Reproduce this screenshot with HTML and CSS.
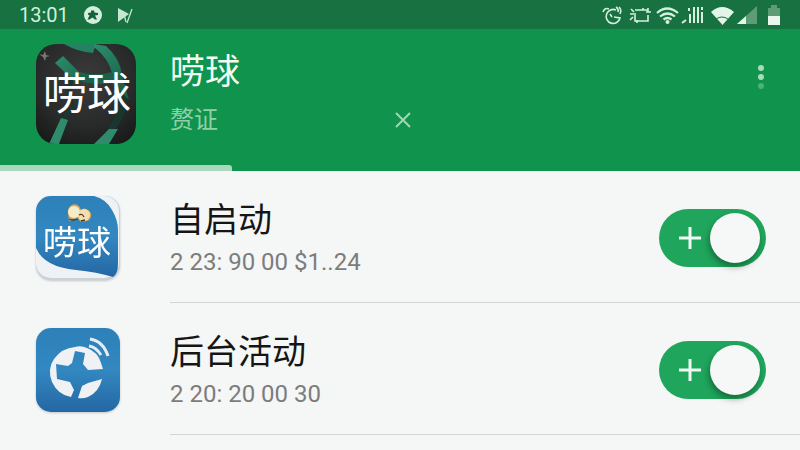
FILE: index.html
```
<!doctype html>
<html lang="zh-CN">
<head>
<meta charset="utf-8">
<title>唠球</title>
<meta name="viewport" content="width=device-width, initial-scale=1">
<link rel="stylesheet" href="styles.css">
</head>
<body>

<div class="statusbar">
  <span class="clock">13:01</span>
  <svg class="status-left" width="52" height="20" viewBox="0 0 52 20" aria-hidden="true">
    <circle cx="9" cy="10" r="9" fill="#d3efdb"/>
    <path d="M7 5.500h3l.5 2 3.500.5v2l-3 .5 2 4h-2l-2.500-2-3 2h-2l2-4-1.500-1V8l3-.5z" fill="#17613a"/>
    <path d="M34 3l11 6-11 8z" fill="#c5e6d0"/>
    <path d="M48 4l-5 14M40 9l2 8" fill="none" stroke="#c5e6d0" stroke-width="1.300"/>
  </svg>

  <!-- alarm, vibrate, wifi, signal, battery -->
  <svg class="status-right" width="180" height="20" viewBox="602 4 180 20" aria-hidden="true">
    <g fill="none" stroke="#d6f0de" stroke-width="1.600">
      <path d="M616 9a7 7 0 1 0 4 8l-6-1M609 8q-4-2-6 3M616 6q3 2 2 5M619 6q3 3 1 7M610 13l2 3"/>
      <path d="M635 9h13v2M648 14v6h-13v-6M643 9v-2M646 11h5M630 13h6M631 8l3 3M630 19l3-3M637 19v3M648 7v3"/>
      <path d="M657 12q10-9 21 0M660 15.500q7.500-6 15 0M663.500 18.500q4-3 8 0" stroke-width="2.200"/>
      <path d="M682 22l4-3M690 13v9M689 7v3M694 6v16M698 6v16M702 11v11M702 6v3" stroke-width="2"/>
    </g>
    <circle cx="667.500" cy="21" r="2" fill="#d6f0de"/>
    <path d="M711 11q11-10 23 0l-11.500 13z" fill="#e2f5e7"/>
    <path d="M716 18q6-4 12 0" fill="none" stroke="#177140"/>
    <path d="M737 23l20-18v18z" fill="#5d9c76"/>
    <path d="M737 23l9-8v8z" fill="#e2f5e7"/>
    <path d="M768 7h3v-3h6v3h3v12h-12z" fill="#5d9c76"/>
    <path d="M768 15h12v9h-12z" fill="#e8f8ec"/>
  </svg>
</div>

<header class="appbar">
  <svg class="app-icon" viewBox="0 0 100 100" role="img" aria-label="唠球">
    <defs>
      <radialGradient id="ball" cx=".5" cy=".35" r=".75">
        <stop offset="0" stop-color="#3b3b3b"/>
        <stop offset=".65" stop-color="#282929"/>
        <stop offset="1" stop-color="#161a18"/>
      </radialGradient>
      <linearGradient id="band" x1="0" y1="0" x2="1" y2="1">
        <stop offset="0" stop-color="#2c8e6c"/>
        <stop offset="1" stop-color="#1c6b50"/>
      </linearGradient>
      <clipPath id="tile"><rect width="100" height="100" rx="20"/></clipPath>
    </defs>
    <g clip-path="url(#tile)">
      <rect width="100" height="100" fill="url(#ball)"/>
      <path d="M82 30Q96 60 74 87" fill="none" stroke="#19372f" stroke-width="7"/>
      <path d="M37 28Q30 52 36 62L27 76" fill="none" stroke="#19372f" stroke-width="5"/>
      <path d="M36 25Q54 34 77 28L86 32 93 56 76 39Q56 42 37 35z" fill="#1c614a"/>
      <path d="M19 19l8-7 17 17-5 9z" fill="url(#band)"/>
      <path d="M28 0h32l-3 9Q42 8 28 0z" fill="#258260"/>
      <path d="M58 0l12 2q14 12 16 29l-10-2Q73 15 58 3z" fill="url(#band)"/>
      <path d="M25 74l7 2-9 24H13zM73 85h9l-9 15H58z" fill="#2f8b6c"/>
      <path d="M3 10l4 1 2-4 1 4 4 1-4 1-1 4-2-4z" fill="#777"/>
    </g>
    <text class="icon-text" x="51" y="66" font-size="44">唠球</text>
  </svg>
  <div class="heading">
    <h1>唠球</h1>
    <div class="subline">
      <span>赘证</span>
      <button class="clear" type="button" aria-label="关闭">
        <svg width="18" height="18" viewBox="0 0 18 18"><path d="M2 2l14 14M16 2L2 16"/></svg>
      </button>
    </div>
  </div>
  <button class="menu" type="button" aria-label="更多">
    <svg width="8" height="28" viewBox="0 0 8 28">
      <circle cx="4" cy="5" r="3"/>
      <circle cx="4" cy="14" r="3"/>
      <circle cx="4" cy="23" r="3" opacity=".4"/>
    </svg>
  </button>
  <div class="tab-indicator"></div>
</header>

<main>
  <div class="row">
    <svg class="row-icon" viewBox="0 0 84 84" role="img" aria-label="唠球">
      <defs>
        <linearGradient id="blue" x1="0" y1="0" x2="0" y2="1">
          <stop offset="0" stop-color="#2d80b8"/>
          <stop offset=".5" stop-color="#3388c1"/>
          <stop offset="1" stop-color="#2467a4"/>
        </linearGradient>
        <clipPath id="small-tile"><rect width="84" height="84" rx="15"/></clipPath>
      </defs>
      <g clip-path="url(#small-tile)">
        <rect width="84" height="84" fill="#c9d2d8"/>
        <rect width="83" height="82" rx="15" fill="#eef2f4"/>
        <path d="M0 0h58q12 3 18 14 6 10 6 20v34q0 10-5 13Q61 76 40 74 8 71 0 52z" fill="url(#blue)"/>
      </g>
      <path d="M33 25l-1-7a6 7 0 0 1 13-4q3-3 7 0a6 6 0 0 1-1 11l-6 1-4-4z" fill="#d2a75d"/>
      <circle cx="38" cy="16" r="6" fill="#f7ecc9"/>
      <circle cx="48" cy="19" r="6" fill="#f3dfae"/>
      <path d="M33 23q4 2 9 0M43 19q3-2 5 2M45 25l4-1" fill="none" stroke="#493b2a" stroke-width="1.300"/>
      <text class="icon-text" x="41" y="59" font-size="34">唠球</text>
    </svg>
    <label class="text" for="autostart">
      <span class="title">自启动</span>
      <span class="detail">2 23: 90 00 $1..24</span>
    </label>
    <span class="switch">
      <input type="checkbox" id="autostart" checked>
      <svg class="plus" viewBox="0 0 22 22" aria-hidden="true"><path d="M11 0v22M0 11h22"/></svg>
    </span>
  </div>

  <div class="row">
    <svg class="row-icon" viewBox="0 0 84 84" aria-hidden="true">
      <rect width="84" height="84" rx="15" fill="url(#blue)"/>
      <g fill="#eff1f4">
        <path d="M39 19Q45 17 51 20 62 24 65 35L67 41 52 42 47 36 49 25 39 23 36 35 32 38 20 36 21 51 34 54 38 62 35 69Q22 67 16 54 11 41 18 31 26 20 39 19z"/>
        <path d="M66 51Q63 64 52 69 47 71 42 70L46 58 52 55z"/>
      </g>
      <path d="M53 18q7 1 12 9M54 11q13 2 18 17" fill="none" stroke="#e5edf3" stroke-width="3"/>
    </svg>
    <label class="text" for="background">
      <span class="title">后台活动</span>
      <span class="detail">2 20: 20 00 30</span>
    </label>
    <span class="switch">
      <input type="checkbox" id="background" checked>
      <svg class="plus" viewBox="0 0 22 22" aria-hidden="true"><path d="M11 0v22M0 11h22"/></svg>
    </span>
  </div>
</main>

</body>
</html>
```
FILE: styles.css
```
:root{--bar:#177140;--green:#10934c;--switch:#1fa65c;--bg:#f5f6f6;}
*{box-sizing:border-box;}
body{margin:0;background:var(--bg);font-family:Roboto,"Noto Sans CJK SC",sans-serif;color:#151515;}
svg{display:block;}
button{padding:0;border:0;background:none;cursor:pointer;}

/* status bar */
.statusbar{display:flex;align-items:center;height:29px;padding:0 18px 0 19px;background:var(--bar);color:#d3efdb;}
.clock{font-size:20px;line-height:28px;}
.status-left{margin-left:15px;}
.status-right{margin-left:auto;}

/* app bar */
.appbar{position:relative;display:flex;align-items:flex-start;min-height:142px;padding:15px 35px 20px 36px;background:var(--green);color:#f0fbf3;}
.app-icon{flex:none;width:100px;height:100px;}
.heading{flex:1;margin-left:34px;}
h1{margin:0;font-size:35px;font-weight:400;line-height:58px;}
.subline{display:flex;align-items:center;gap:176px;font-size:24px;line-height:36px;color:#8fd0a8;}
.clear svg{fill:none;stroke:#a0d8b4;stroke-width:2;}
.menu{margin-top:19px;}
.menu svg{fill:#a9dcbb;}
.tab-indicator{position:absolute;left:0;bottom:0;width:29%;height:6px;background:#a9d8bc;border-top-right-radius:3px;}
.icon-text{fill:#fff;font-family:"Noto Sans CJK SC",sans-serif;text-anchor:middle;}

/* settings rows */
.row{position:relative;display:flex;align-items:center;min-height:132px;padding:2px 0 0 36px;}
.row::after{content:"";position:absolute;left:170px;right:0;bottom:0;height:1px;background:#d3d5d5;}
.row-icon{flex:none;width:84px;height:84px;filter:drop-shadow(0 1px 1px rgba(0,0,0,.2));}
.text{flex:1;margin-left:50px;}
.title,.detail{display:block;}
.title{font-size:34px;line-height:48px;}
.detail{font-size:24px;line-height:36px;color:#7b7d7d;}

/* toggle switch */
.switch{position:relative;flex:none;margin-right:34px;}
.switch input{display:flex;align-items:center;justify-content:flex-end;width:107px;height:58px;margin:0;padding:6px;border-radius:29px;background:#b5b9b7;appearance:none;cursor:pointer;}
.switch input:checked{background:var(--switch);}
.switch input::before{content:"";width:50px;height:50px;border-radius:50%;background:#f6f7f7;box-shadow:-1px 4px 6px rgba(0,0,0,.35);}
.switch input:not(:checked){justify-content:flex-start;}
.switch input:not(:checked) + .plus{display:none;}
.plus{position:absolute;left:20px;top:18px;width:22px;height:22px;fill:none;stroke:#eefaf2;stroke-width:3;pointer-events:none;}
```
